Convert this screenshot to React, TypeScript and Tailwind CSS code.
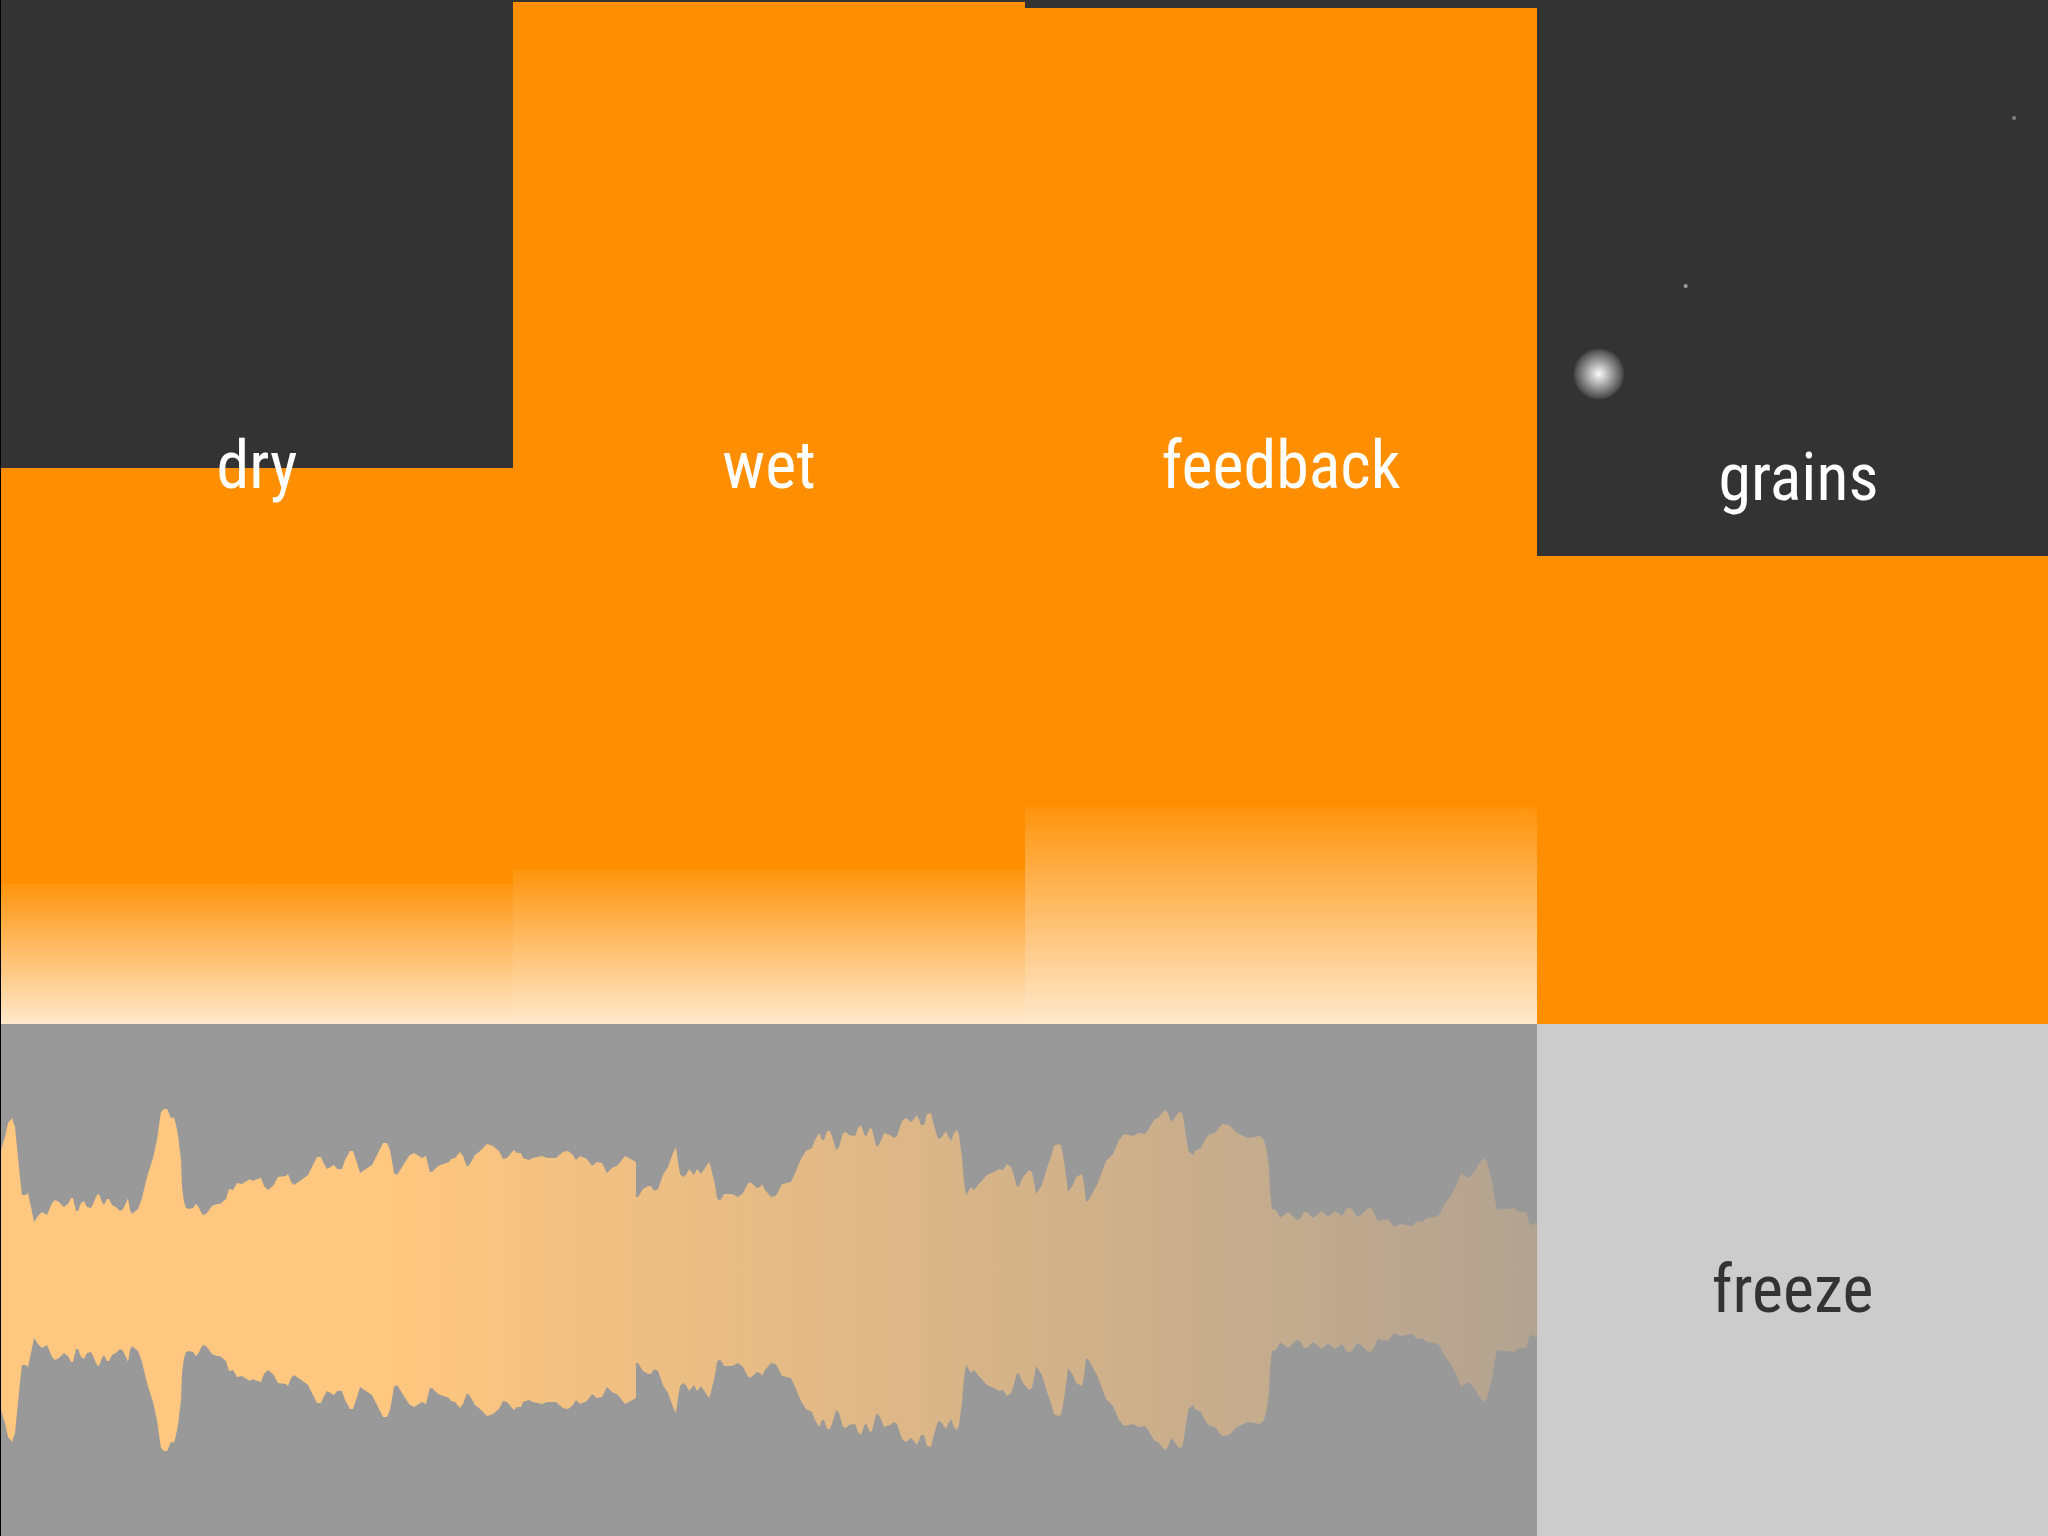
import { useId, useState } from "react";

const labelFont =
  "font-['Roboto_Condensed','Open_Sans_Condensed','Lato',sans-serif] font-normal text-[66px] leading-[80px]";

type Fader = { label: string; value: number; meter: number };

const faders: Fader[] = [
  { label: "dry", value: 54.3, meter: 13.7 },
  { label: "wet", value: 99.8, meter: 15 },
  { label: "feedback", value: 99.2, meter: 21.2 },
  { label: "grains", value: 45.7, meter: 0 },
];

// Half-height of the recorded signal at each horizontal position: x, amplitude.
const samples: number[] = [
  1, 130, 5, 143, 8, 157, 12, 162, 15, 153, 18, 123, 20, 102, 22, 85, 26, 85, 28, 87, 31, 73, 34, 58,
  38, 64, 42, 68, 47, 65, 52, 77, 55, 80, 59, 78, 64, 73, 68, 76, 71, 82, 73, 82, 76, 69, 78, 69,
  81, 77, 84, 79, 87, 73, 91, 72, 93, 76, 97, 85, 99, 86, 102, 78, 104, 75, 107, 81, 109, 81, 112, 75,
  116, 73, 120, 69, 123, 71, 126, 77, 128, 82, 130, 70, 132, 66, 138, 71, 142, 82, 147, 103, 153, 122,
  157, 140, 159, 155, 161, 168, 164, 171, 167, 171, 168, 169, 171, 162, 173, 162, 174, 163, 176, 155,
  178, 145, 181, 120, 182, 93, 184, 78, 186, 72, 189, 71, 193, 72, 196, 76, 198, 74, 202, 66, 204, 65,
  207, 67, 212, 74, 217, 76, 220, 76, 226, 81, 229, 91, 233, 90, 237, 97, 242, 96, 250, 101, 252, 99,
  258, 101, 261, 102, 264, 94, 268, 90, 273, 94, 278, 103, 286, 104, 288, 106, 291, 98, 294, 95,
  300, 99, 308, 105, 313, 115, 317, 123, 321, 123, 323, 118, 327, 111, 334, 115, 337, 111, 342, 111,
  345, 120, 350, 129, 353, 129, 357, 117, 360, 107, 366, 111, 372, 115, 378, 127, 383, 137, 387, 137,
  390, 130, 394, 107, 397, 105, 399, 108, 405, 118, 410, 125, 414, 127, 422, 122, 426, 124, 428, 115,
  430, 108, 432, 108, 438, 114, 449, 118, 451, 121, 455, 122, 460, 128, 463, 124, 467, 113, 470, 116,
  475, 125, 479, 128, 487, 136, 493, 134, 499, 129, 503, 121, 507, 122, 514, 130, 517, 127, 521, 127,
  523, 122, 529, 120, 533, 122, 542, 124, 547, 122, 556, 122, 563, 128, 568, 129, 572, 126, 576, 120,
  580, 124, 587, 121, 592, 114, 597, 118, 602, 117, 607, 107, 612, 112, 618, 115, 625, 124, 636, 118,
  636, 83, 638, 83, 643, 91, 648, 94, 651, 94, 654, 89, 658, 91, 663, 105, 668, 113, 673, 127,
  676, 133, 678, 118, 680, 106, 683, 103, 686, 105, 689, 111, 694, 105, 697, 111, 701, 106, 705, 112,
  709, 118, 711, 112, 715, 95, 717, 82, 720, 79, 724, 86, 732, 86, 738, 83, 743, 87, 747, 95,
  750, 98, 757, 92, 760, 93, 762, 96, 765, 90, 771, 83, 775, 84, 777, 86, 782, 96, 791, 98,
  795, 107, 801, 121, 806, 129, 812, 132, 815, 140, 819, 147, 822, 140, 824, 140, 827, 149, 830, 149,
  833, 141, 836, 130, 839, 133, 843, 147, 846, 148, 849, 145, 855, 144, 858, 152, 861, 155, 864, 146,
  866, 143, 870, 152, 872, 151, 875, 138, 877, 133, 880, 137, 884, 147, 890, 145, 894, 142, 897, 144,
  902, 159, 906, 162, 911, 158, 914, 161, 917, 165, 921, 155, 924, 155, 927, 166, 931, 167, 933, 158,
  938, 141, 941, 142, 946, 149, 948, 144, 951, 139, 954, 147, 957, 150, 959, 145, 962, 122, 964, 97,
  966, 85, 968, 88, 971, 93, 974, 90, 978, 95, 987, 105, 994, 108, 999, 111, 1003, 110, 1007, 116,
  1011, 113, 1014, 104, 1017, 93, 1019, 94, 1023, 103, 1029, 110, 1032, 108, 1034, 98, 1036, 86,
  1042, 95, 1047, 112, 1051, 123, 1054, 134, 1058, 136, 1061, 135, 1063, 125, 1066, 105, 1068, 88,
  1073, 95, 1076, 103, 1082, 106, 1084, 97, 1086, 79, 1088, 79, 1097, 95, 1106, 119, 1113, 126,
  1119, 140, 1124, 146, 1132, 144, 1140, 147, 1145, 146, 1148, 150, 1154, 160, 1158, 162, 1165, 170,
  1168, 167, 1171, 158, 1174, 161, 1179, 168, 1182, 167, 1184, 158, 1187, 137, 1189, 128, 1193, 125,
  1195, 129, 1201, 132, 1206, 142, 1210, 146, 1215, 147, 1222, 156, 1229, 155, 1237, 147, 1248, 142,
  1260, 144, 1264, 140, 1267, 128, 1269, 112, 1270, 88, 1272, 71, 1276, 70, 1280, 62, 1288, 68,
  1297, 60, 1300, 61, 1304, 68, 1307, 68, 1313, 62, 1322, 69, 1328, 63, 1335, 69, 1342, 64, 1347, 72,
  1352, 71, 1357, 63, 1361, 65, 1368, 72, 1372, 71, 1378, 59, 1388, 61, 1394, 53, 1400, 56, 1412, 54,
  1417, 59, 1422, 58, 1427, 62, 1434, 63, 1439, 65, 1444, 75, 1450, 83, 1457, 96, 1461, 107, 1468, 102,
  1473, 106, 1480, 118, 1484, 122, 1487, 118, 1492, 98, 1495, 80, 1497, 70, 1502, 71, 1509, 71,
  1514, 72, 1518, 68, 1526, 68, 1528, 62, 1530, 54, 1537, 58,
];

function wavePoints(): string {
  const upper: string[] = [];
  const lower: string[] = [];
  for (let i = 0; i < samples.length; i += 2) {
    upper.push(`${samples[i]},${256 - samples[i + 1]}`);
    lower.unshift(`${samples[i]},${256 + samples[i + 1]}`);
  }
  return [...upper, ...lower].join(" ");
}

function Grains() {
  return (
    <svg
      viewBox="0 0 512 1024"
      preserveAspectRatio="none"
      aria-hidden="true"
      className="col-start-1 row-start-1 size-full"
    >
      <defs>
        <radialGradient id="glow">
          <stop offset="0" stopColor="#fff" stopOpacity="0.98" />
          <stop offset="0.9" stopColor="#fff" stopOpacity="0.15" />
          <stop offset="1" stopColor="#fff" stopOpacity="0" />
        </radialGradient>
      </defs>
      <circle cx="62" cy="374" r="26" fill="url(#glow)" />
      <circle cx="149" cy="286" r="2" fill="#a0a0a0" />
      <circle cx="478" cy="118" r="2" fill="#808080" />
    </svg>
  );
}

function FaderPanel({ label, value, meter }: Fader) {
  const id = useId();
  const [level, setLevel] = useState(value);
  const isGrains = label === "grains";
  return (
    <div className="grid grid-cols-1 grid-rows-1 overflow-hidden bg-[#333333]">
      {isGrains && <Grains />}
      <div
        className="col-start-1 row-start-1 self-end bg-[#ff8f00]"
        style={{ height: `${level}%` }}
      />
      <div
        className="col-start-1 row-start-1 self-end bg-linear-to-b from-white/5 to-white/80"
        style={{ height: `${meter}%` }}
      />
      <label
        htmlFor={id}
        className={`${labelFont} col-start-1 row-start-1 self-center text-center text-white ${
          isGrains ? "pb-17 pl-3" : "pb-23"
        }`}
      >
        {label}
      </label>
      <input
        id={id}
        type="range"
        min={0}
        max={100}
        step={0.1}
        value={level}
        onChange={(e) => setLevel(Number(e.target.value))}
        className="col-start-1 row-start-1 size-full cursor-pointer opacity-0 [direction:rtl] [writing-mode:vertical-lr]"
      />
    </div>
  );
}

export default function App() {
  const [frozen, setFrozen] = useState(false);
  return (
    <main className="grid h-screen grid-cols-[repeat(3,25vw)_minmax(0,1fr)] grid-rows-[2fr_1fr] border-l border-black bg-[#333333]">
      {faders.map((f) => (
        <FaderPanel key={f.label} {...f} />
      ))}
      <div className="col-span-3 min-h-0 bg-[#999999]">
        <svg
          viewBox="1 0 1536 512"
          preserveAspectRatio="none"
          className="block size-full"
          role="img"
          aria-label="Recorded waveform"
        >
          <defs>
            <linearGradient id="fade" gradientUnits="userSpaceOnUse" x1="385" y1="0" x2="1537" y2="0">
              <stop offset="0" stopColor="#ffc77f" />
              <stop offset="1" stopColor="#b2a391" />
            </linearGradient>
          </defs>
          <polygon points={wavePoints()} fill="url(#fade)" />
        </svg>
      </div>
      <button
        type="button"
        aria-pressed={frozen}
        onClick={() => setFrozen(!frozen)}
        className={`${labelFont} flex cursor-pointer items-center justify-center bg-[#cccccc] pt-5 text-[#333333]`}
      >
        freeze
      </button>
    </main>
  );
}
